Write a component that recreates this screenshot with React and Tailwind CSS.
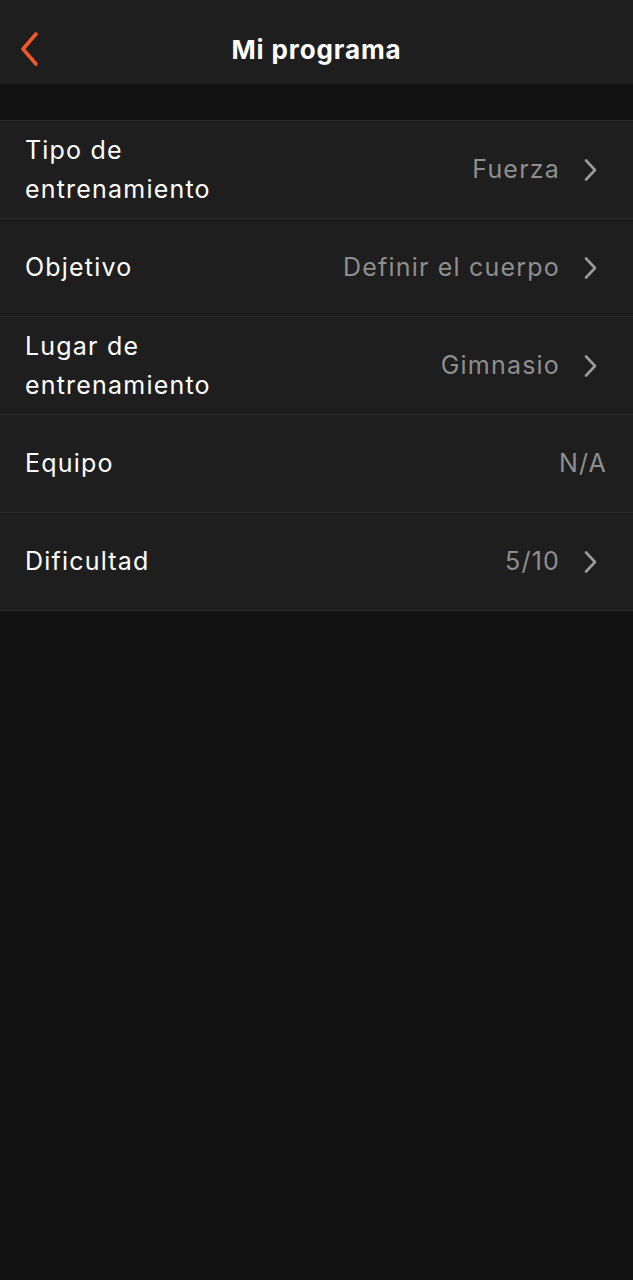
import React from "react";

const rows = [
  { label: ["Tipo de", "entrenamiento"], value: "Fuerza", arrow: true },
  { label: ["Objetivo"], value: "Definir el cuerpo", arrow: true },
  { label: ["Lugar de", "entrenamiento"], value: "Gimnasio", arrow: true },
  { label: ["Equipo"], value: "N/A", arrow: false },
  { label: ["Dificultad"], value: "5/10", arrow: true },
];

const Chevron = () => (
  <svg width="24" height="24" viewBox="0 0 24 24" fill="none" className="ml-[23px]">
    <path d="M3 2.5l9 9.5-9 9.5" stroke="#9a9a9a" strokeWidth="2.6" strokeLinecap="round" strokeLinejoin="round" />
  </svg>
);

const App = () => {
  return (
    <div className="min-h-[1280px] bg-[#121212] font-['Inter',sans-serif] text-white">
      {/* Header */}
      <div className="relative flex h-[84px] items-center justify-center bg-[#1e1e1e] pt-[14px]">
        <button className="absolute left-[18px] top-[30px]">
          <svg width="24" height="38" viewBox="0 0 24 38" fill="none">
            <path d="M18 4L5 19l13 15" stroke="#f0582a" strokeWidth="3.6" strokeLinecap="round" strokeLinejoin="round" />
          </svg>
        </button>
        <h1 className="text-[26px] font-bold tracking-[0.9px]">Mi programa</h1>
      </div>

      <div className="h-[36px]" />

      {/* Settings list */}
      <div className="border-t border-[#2c2c2c]">
        {rows.map((row) => (
          <div
            key={row.value}
            className="flex h-[98px] items-center justify-between border-b border-[#2c2c2c] bg-[#1e1e1e] pl-[25px] pr-[26px]"
          >
            <div className="text-[25px] leading-[39px] tracking-[1.2px]">
              {row.label.map((l) => (
                <div key={l}>{l}</div>
              ))}
            </div>
            <div className="flex items-center">
              <span className="text-[25px] tracking-[1.2px] text-[#8e8e8e]">{row.value}</span>
              {row.arrow && <Chevron />}
            </div>
          </div>
        ))}
      </div>
    </div>
  );
};

export default App;
